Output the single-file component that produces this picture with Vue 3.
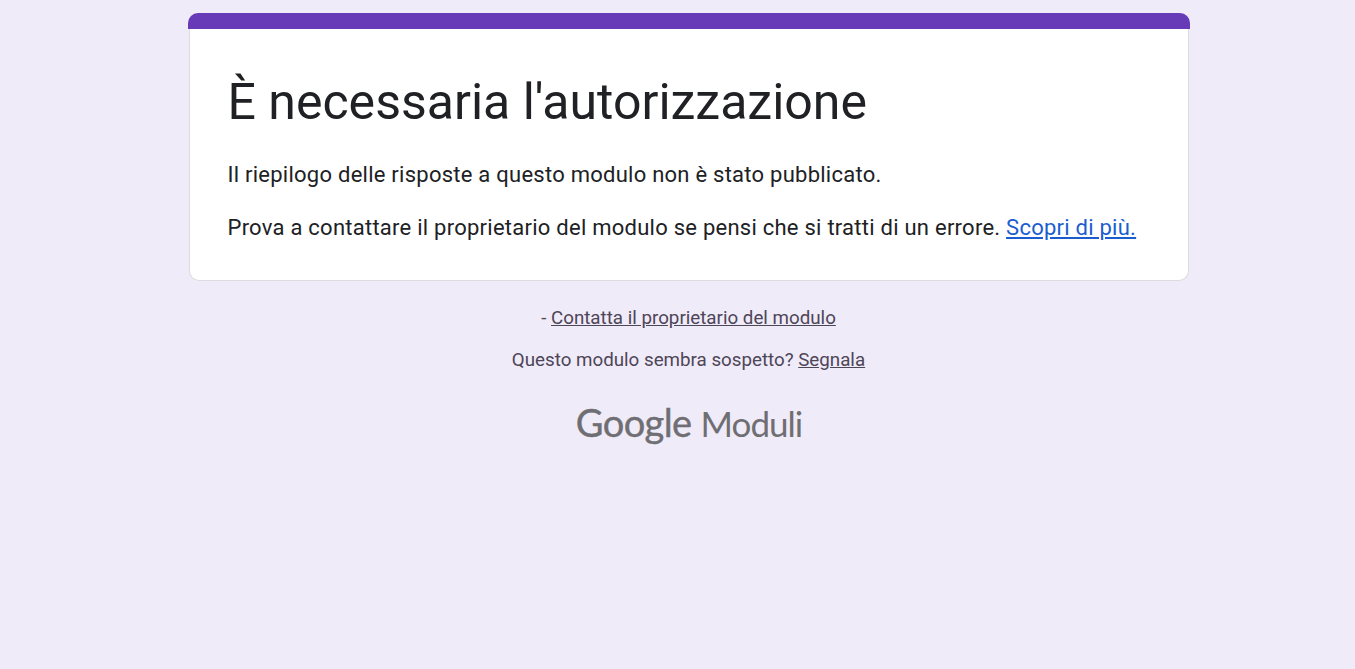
<script setup>
const title = "È necessaria l'autorizzazione";
</script>

<template>
  <main class="page">
    <section class="card">
      <div class="bar"></div>
      <div class="body">
        <h1>{{ title }}</h1>
        <p class="first">Il riepilogo delle risposte a questo modulo non è stato pubblicato.</p>
        <p class="second">Prova a contattare il proprietario del modulo se pensi che si tratti di un errore. <a href="#" class="blue">Scopri di più.</a></p>
      </div>
    </section>
    <p class="foot one">- <a href="#">Contatta il proprietario del modulo</a></p>
    <p class="foot two">Questo modulo sembra sospetto? <a href="#">Segnala</a></p>
    <div class="logo"><span class="g">Google</span><span class="m">Moduli</span></div>
  </main>
</template>

<style>
html, body { margin: 0; background: #f0ebf8; }
</style>

<style scoped>
.page {
  min-height: 669px;
  box-sizing: border-box;
  padding: 13px 0 0 22px;
  display: flex;
  flex-direction: column;
  align-items: center;
  font-family: Roboto, sans-serif;
  background: #f0ebf8;
}
.card { width: 1002px; }
.bar { height: 16px; background: #673ab7; border-radius: 10px 10px 0 0; }
.body {
  margin: 0 1px;
  height: 252px;
  box-sizing: border-box;
  background: #fff;
  border: 1px solid #dadce0;
  border-top: 0;
  border-radius: 0 0 10px 10px;
  padding: 0 38px;
  color: #202124;
}
h1 { margin: 0; padding-top: 42px; font-size: 50px; line-height: 62px; font-weight: 400; }
.body p { margin: 0; font-size: 22px; letter-spacing: .25px; line-height: 28px; }
.first { padding-top: 28px; }
.second { padding-top: 25px; }
.blue { color: #1a5dd0; }
.foot { margin: 0; font-size: 18.75px; line-height: 24px; color: #4d4558; }
.foot a { color: #4d4558; }
.one { margin-top: 25px; }
.two { margin-top: 18px; }
.logo { margin-top: 27px; margin-left: 1px; display: flex; align-items: baseline; gap: 9px; color: #6f6e73; font-family: Lato, sans-serif; }
.g { font-size: 38px; letter-spacing: -.6px; -webkit-text-stroke: .4px #6f6e73; }
.m { font-size: 35px; letter-spacing: -1px; }
</style>
